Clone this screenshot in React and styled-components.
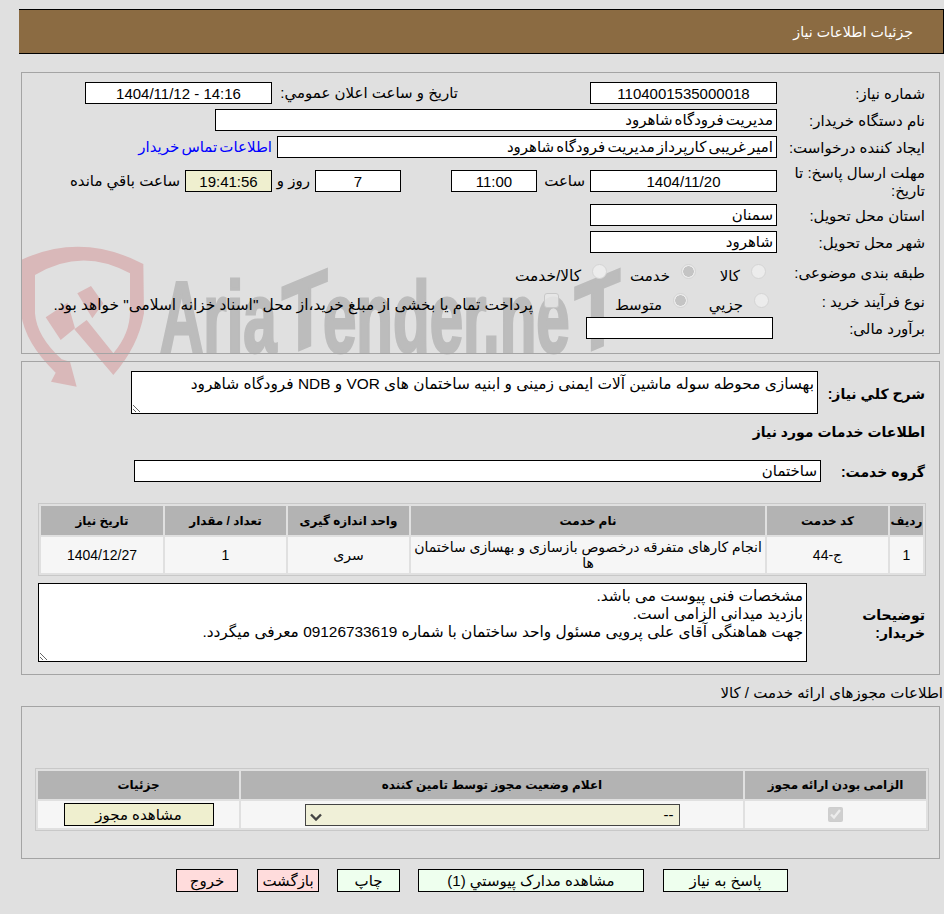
import React from "react";
import styled, { createGlobalStyle } from "styled-components";

const GlobalStyle = createGlobalStyle`
  html, body {
    margin: 0;
    padding: 0;
    background: #e0e0e0;
    overflow: hidden;
  }
  body, input, textarea, select, button {
    font-family: "Liberation Sans", "DejaVu Sans", sans-serif;
    font-size: 15px;
    color: #000;
  }
`;

const Page = styled.div`
  position: relative;
  width: 944px;
  height: 914px;
  padding-top: 9px;
  box-sizing: border-box;
  overflow: hidden;
`;

const Watermark = styled.div`
  position: absolute;
  left: 15px;
  top: 240px;
  width: 620px;
  height: 160px;
  direction: ltr;
`;

const WatermarkText = styled.div`
  position: absolute;
  left: 145px;
  top: 22px;
  font-family: "Liberation Sans", sans-serif;
  font-weight: 700;
  font-size: 100px;
  line-height: 110px;
  color: #bcbcbc;
  -webkit-text-stroke: 3px #bcbcbc;
  white-space: nowrap;
  transform: scaleX(0.6);
  transform-origin: left top;
`;

const SlantedT = styled.span`
  display: inline-block;
  margin: 0 ${(p) => p.$space}px;
  transform: translateY(5px) skewY(-14deg) scaleX(1.25);
  transform-origin: left bottom;
`;

const Content = styled.div`
  position: relative;
`;

const Header = styled.div`
  height: 43px;
  margin-left: 0;
  margin-right: 19px;
  margin-inline-start: 0;
  margin-inline-end: 19px;
  border: 1px solid #000;
  border-left: 0;
  background: #8b6b42;
  color: #fff;
  font-size: 14.2px;
  line-height: 44px;
  padding-right: 30px;
`;

const Panel = styled.div`
  margin: ${(p) => p.$top}px 4px 0 0;
  width: 903px;
  height: ${(p) => p.$height}px;
  border: 1px solid #a4a4a4;
  padding-top: ${(p) => p.$pad}px;
  padding-right: 14px;
`;

const Row = styled.div`
  display: flex;
  align-items: center;
  height: ${(p) => p.$h || 22}px;
  margin-top: ${(p) => p.$before || 0}px;
  margin-bottom: ${(p) => (p.$gap === undefined ? 5 : p.$gap)}px;
`;

const Label = styled.div`
  width: ${(p) => p.$w || 148}px;
  flex: none;
  line-height: 18px;
  font-weight: ${(p) => (p.$bold ? 700 : 400)};
  font-size: ${(p) => (p.$bold ? 14 : 15)}px;
  box-sizing: border-box;
  padding-left: 6px;
  padding-top: 2px;
`;

const Field = styled.input`
  flex: none;
  width: ${(p) => p.$w}px;
  height: ${(p) => p.$h || 22}px;
  box-sizing: border-box;
  border: 1px solid #000;
  border-radius: 0;
  outline: 0;
  margin: 0;
  padding: 0 3px;
  background: ${(p) => p.$bg || "#fff"};
  text-align: ${(p) => (p.$center ? "center" : "right")};
  word-spacing: ${(p) => (p.$center ? 0 : -2)}px;
  margin-right: ${(p) => p.$mr || 0}px;
`;

const Inline = styled.span`
  flex: none;
  margin-right: ${(p) => p.$mr || 0}px;
  width: ${(p) => (p.$w ? `${p.$w}px` : "auto")};
  white-space: nowrap;
`;

const Link = styled.a`
  color: #0000ff;
  text-decoration: none;
  word-spacing: -2px;
  margin-right: 5px;
  white-space: nowrap;
`;

const Options = styled.div`
  display: flex;
  align-items: center;
  padding-right: ${(p) => p.$pad}px;
`;

const Option = styled.label`
  display: flex;
  align-items: center;
  gap: 11px;
  width: ${(p) => (p.$w ? `${p.$w}px` : "auto")};
  font-size: ${(p) => (p.$w ? 15 : 15.4)}px;
  white-space: nowrap;
  padding-top: 8px;
`;

const Radio = styled.input.attrs({ type: "radio", disabled: true })`
  appearance: none;
  width: 15px;
  height: 15px;
  margin: -9px 0 0 0;
  flex: none;
  border-radius: 50%;
  border: 1px solid #d4d4d4;
  background: ${(p) =>
    p.defaultChecked
      ? "radial-gradient(circle, #c4c4c4 0 5px, #ececec 5.5px)"
      : "#ececec"};
`;

const Check = styled.input.attrs({ type: "checkbox", disabled: true })`
  appearance: none;
  width: 15px;
  height: 15px;
  margin: -9px 0 0 0;
  flex: none;
  border-radius: 3px;
  border: 1px solid #c8c8c8;
  background: rgba(230, 230, 230, 0.85);
`;

const Note = styled.textarea`
  display: block;
  box-sizing: border-box;
  width: ${(p) => p.$w}px;
  height: ${(p) => p.$h}px;
  margin: 0;
  padding: 3px 3px;
  border: 1px solid #000;
  border-radius: 0;
  outline: 0;
  background: #fff;
  font-size: 15.4px;
  line-height: 18px;
  overflow: hidden;
  flex: none;
`;

const Heading = styled.div`
  font-weight: 700;
  font-size: 14px;
  line-height: 18px;
`;

const Table = styled.table`
  table-layout: fixed;
  width: ${(p) => p.$w}px;
  margin-right: ${(p) => p.$mr}px;
  border: 1px solid #c8c8c8;
  border-collapse: separate;
  border-spacing: 2px;
  color: #000;
`;

const Col = styled.col`
  width: ${(p) => p.$w}px;
`;

const Th = styled.th`
  background: #b3b3b3;
  height: ${(p) => p.$h}px;
  padding: 0;
  font-size: 12px;
  font-weight: 700;
  text-align: center;
`;

const Td = styled.td`
  background: #f6f6f6;
  height: ${(p) => p.$h}px;
  padding: 0 2px;
  font-size: 14px;
  line-height: 16px;
  text-align: center;
`;

const Picker = styled.select`
  display: block;
  appearance: none;
  width: 375px;
  height: 22px;
  margin: 0 auto;
  padding: 0 5px;
  background-color: #f0f0d8;
  background-image: url("data:image/svg+xml,%3Csvg xmlns='http://www.w3.org/2000/svg' width='12' height='8' viewBox='0 0 12 8'%3E%3Cpath d='M1 1.5l5 5 5-5' fill='none' stroke='%23444' stroke-width='2.4'/%3E%3C/svg%3E");
  background-repeat: no-repeat;
  background-position: 4px 8px;
  border: 1px solid #444;
  border-radius: 0;
`;

const LicenseButton = styled.button`
  display: block;
  width: 150px;
  height: 23px;
  margin: 0 auto;
  padding: 1px 0 0;
  border: 1px solid #000;
  background: #efefcf;
`;

const RequiredBox = styled.input.attrs({
  type: "checkbox",
  disabled: true,
  defaultChecked: true,
})`
  display: block;
  width: 15px;
  height: 15px;
  margin: 0 auto;
`;

const SectionTitle = styled.div`
  margin-top: 9px;
  height: 19px;
  line-height: 17px;
  margin-right: 1px;
`;

const Actions = styled.div`
  display: flex;
  margin: 10px 156px 0 0;
`;

const Action = styled.button`
  flex: none;
  width: ${(p) => p.$w}px;
  height: 23px;
  margin-left: ${(p) => p.$gap}px;
  padding: 0;
  border: 1px solid #000;
  border-radius: 0;
  background: ${(p) => (p.$danger ? "#ffdcdc" : "#eeffee")};
`;

const Shield = () => (
  <svg width="300" height="160" viewBox="0 0 900 480" fill="#d9b8b9">
    <path d="M18 60 Q200 -25 385 72 L387 220 Q370 320 295 405 L178 268 L215 240 L295 340 Q345 280 345 215 L345 100 Q200 20 60 105 L60 220 Q65 290 140 358 L165 365 L185 440 L108 425 L122 398 Q30 310 18 220 Z" />
    <path d="M92 232 L158 188 L180 265 L137 300 Z" />
    <path d="M187 160 L228 138 L265 190 L232 235 Z" />
  </svg>
);

const needColumns = [
  { title: "رديف", width: 33 },
  { title: "کد خدمت", width: 121 },
  { title: "نام خدمت", width: 354 },
  { title: "واحد اندازه گیری", width: 121 },
  { title: "تعداد / مقدار", width: 121 },
  { title: "تاریخ نیاز", width: 122 },
];

const notes = `مشخصات فنی پیوست می باشد.
بازدید میدانی الزامی است.
جهت هماهنگی آقای علی پرویی مسئول واحد ساختمان با شماره 09126733619 معرفی میگردد.`;

export default function App() {
  return (
    <Page dir="rtl">
      <GlobalStyle />
      <Watermark>
        <Shield />
        <WatermarkText>
          Aria<SlantedT $space={8}>T</SlantedT>ender.ne<SlantedT $space={8}>T</SlantedT>
        </WatermarkText>
      </Watermark>
      <Content>
        <Header>جزئیات اطلاعات نیاز</Header>

        <Panel $top={18} $height={271} $pad={9}>
          <Row>
            <Label>شماره نیاز:</Label>
            <Field $w={187} $center readOnly value="1104001535000018" />
            <Inline $mr={132} $w={186}>تاریخ و ساعت اعلان عمومي:</Inline>
            <Field $w={187} $center readOnly value="14:16 - 1404/11/12" />
          </Row>
          <Row>
            <Label>نام دستگاه خریدار:</Label>
            <Field $w={562} readOnly value="مدیریت فرودگاه شاهرود" />
          </Row>
          <Row>
            <Label>ایجاد کننده درخواست:</Label>
            <Field $w={500} readOnly value="امیر غریبی کارپرداز مدیریت فرودگاه شاهرود" />
            <Link href="#">اطلاعات تماس خریدار</Link>
          </Row>
          <Row $h={36}>
            <Label>مهلت ارسال پاسخ: تا تاریخ:</Label>
            <Field $w={187} $center readOnly value="1404/11/20" />
            <Inline $mr={5} $w={48}>ساعت</Inline>
            <Field $w={86} $center readOnly value="11:00" />
            <Field $w={86} $mr={50} $center readOnly value="7" />
            <Inline $mr={5} $w={38}>روز و</Inline>
            <Field $w={87} $bg="#efefcf" $center readOnly value="19:41:56" />
            <Inline $mr={5}>ساعت باقي مانده</Inline>
          </Row>
          <Row>
            <Label>استان محل تحویل:</Label>
            <Field $w={187} readOnly value="سمنان" />
          </Row>
          <Row>
            <Label>شهر محل تحویل:</Label>
            <Field $w={187} readOnly value="شاهرود" />
          </Row>
          <Row $h={27}>
            <Label>طبقه بندی موضوعی:</Label>
            <Options $pad={11}>
              <Option $w={70}><Radio />کالا</Option>
              <Option $w={89}><Radio defaultChecked />خدمت</Option>
              <Option><Radio />کالا/خدمت</Option>
            </Options>
          </Row>
          <Row>
            <Label>نوع فرآیند خرید :</Label>
            <Options $pad={8}>
              <Option $w={81}><Radio />جزيي</Option>
              <Option $w={129}><Radio defaultChecked />متوسط</Option>
              <Option><Check />پرداخت تمام یا بخشی از مبلغ خرید،از محل "اسناد خزانه اسلامی" خواهد بود.</Option>
            </Options>
          </Row>
          <Row>
            <Label>برآورد مالی:</Label>
            <Field $w={187} $mr={4} readOnly value="" />
          </Row>
        </Panel>

        <Panel $top={7} $height={303} $pad={9}>
          <Row $h={43} $gap={9}>
            <Label $bold $w={107}>شرح کلي نیاز:</Label>
            <Note $w={687} $h={43} readOnly value="بهسازی محوطه سوله ماشین آلات ایمنی زمینی و ابنیه ساختمان های VOR و NDB فرودگاه شاهرود" />
          </Row>
          <Row $h={18} $gap={19}>
            <Heading>اطلاعات خدمات مورد نیاز</Heading>
          </Row>
          <Row $gap={21}>
            <Label $bold $w={104}>گروه خدمت:</Label>
            <Field $w={687} readOnly value="ساختمان" />
          </Row>
          <Table $w={888} $mr={-1}>
            <colgroup>
              {needColumns.map((c) => (
                <Col key={c.title} $w={c.width} />
              ))}
            </colgroup>
            <thead>
              <tr>
                {needColumns.map((c) => (
                  <Th key={c.title} $h={29}>{c.title}</Th>
                ))}
              </tr>
            </thead>
            <tbody>
              <tr>
                <Td $h={36}>1</Td>
                <Td $h={36}>ج-44</Td>
                <Td $h={36}>انجام کارهای متفرقه درخصوص بازسازی و بهسازی ساختمان ها</Td>
                <Td $h={36}>سری</Td>
                <Td $h={36}>1</Td>
                <Td $h={36}>1404/12/27</Td>
              </tr>
            </tbody>
          </Table>
          <Row $h={79} $gap={0} $before={7}>
            <Label $bold $w={118}>توضیحات خریدار:</Label>
            <Note $w={769} $h={79} readOnly value={notes} />
          </Row>
        </Panel>

        <SectionTitle>اطلاعات مجوزهای ارائه خدمت / کالا</SectionTitle>

        <Panel $top={3} $height={90} $pad={61}>
          <Table $w={894} $mr={-4}>
            <colgroup>
              <Col $w={181} />
              <Col $w={502} />
              <Col $w={201} />
            </colgroup>
            <thead>
              <tr>
                <Th $h={28}>الزامی بودن ارائه مجوز</Th>
                <Th $h={28}>اعلام وضعیت مجوز توسط تامین کننده</Th>
                <Th $h={28}>جزئیات</Th>
              </tr>
            </thead>
            <tbody>
              <tr>
                <Td $h={27}><RequiredBox /></Td>
                <Td $h={27}>
                  <Picker defaultValue="none">
                    <option value="none">--</option>
                  </Picker>
                </Td>
                <Td $h={27}><LicenseButton>مشاهده مجوز</LicenseButton></Td>
              </tr>
            </tbody>
          </Table>
        </Panel>

        <Actions>
          <Action $w={125} $gap={19}>پاسخ به نیاز</Action>
          <Action $w={226} $gap={18}>مشاهده مدارک پیوستي (1)</Action>
          <Action $w={63} $gap={18}>چاپ</Action>
          <Action $w={62} $gap={19} $danger>بازگشت</Action>
          <Action $w={62} $gap={0} $danger>خروج</Action>
        </Actions>
      </Content>
    </Page>
  );
}
